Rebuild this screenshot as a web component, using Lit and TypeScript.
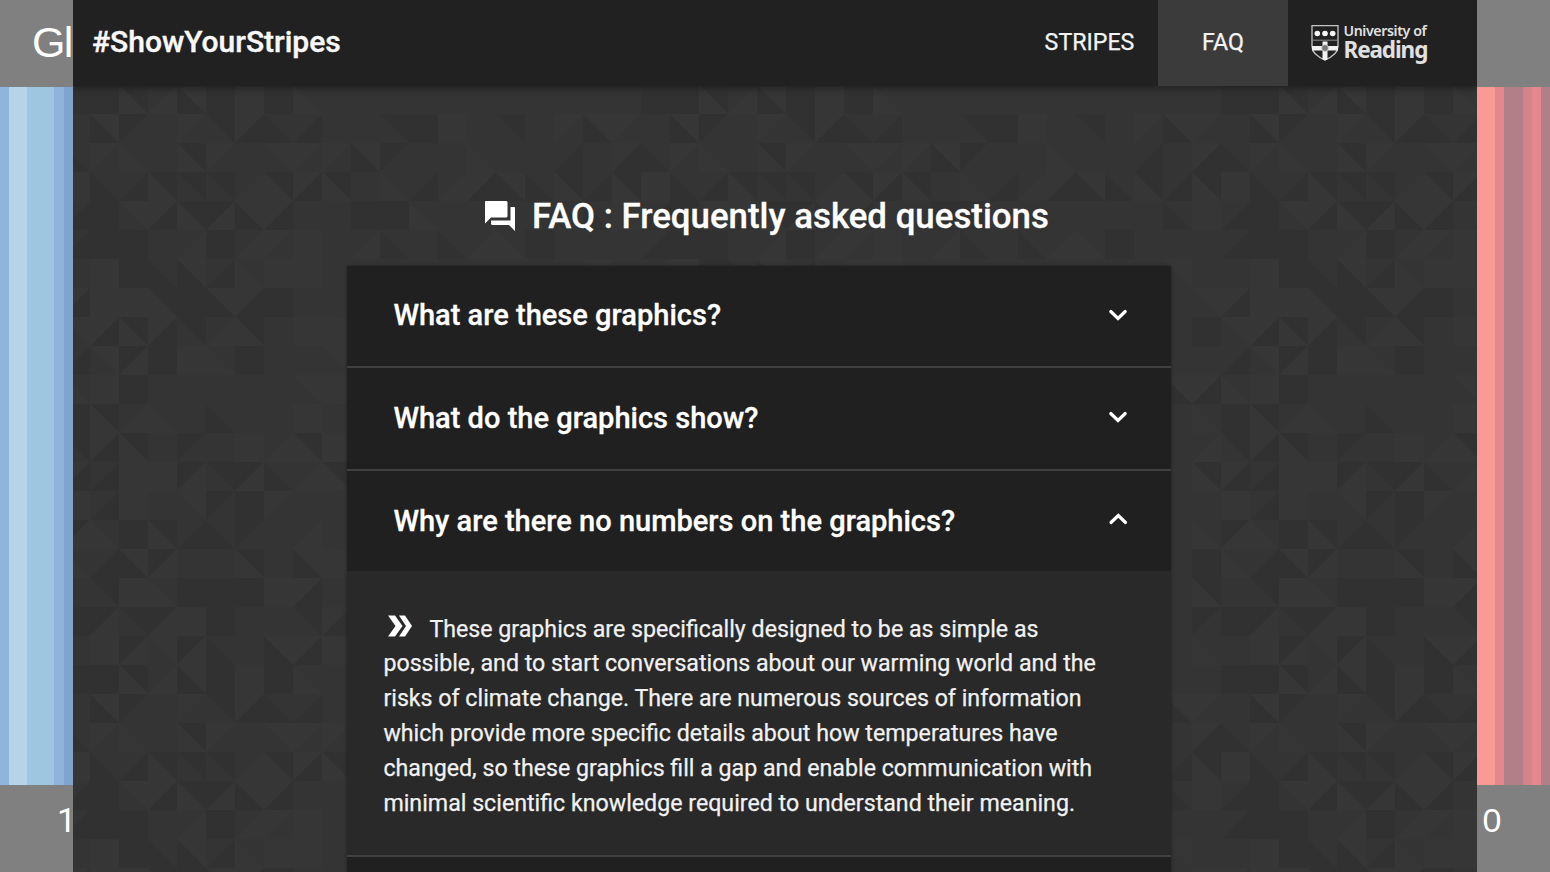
import { LitElement, html, svg, css } from "lit";
import { customElement, state } from "lit/decorators.js";

// Each token describes one square of the background tile.
// Triangles: a upper-right, b lower-left, c upper-left, e lower-right, d whole square.
// Lower case is the dark tone, upper case the light one.
const TILE = [
  "Ab c . C a Ce b e . . a d D . a . C Ab C",
  "C B . aB C . A C C Ab c . . B . . e . Ce b",
  "b e aB a a E aB Ce aB . B e E Ce bA b aB e Ba D",
  "d A Ce aB Ec bA Ce . . d d B . . . . . b D e",
  "d d . E d E C D . E b . b E B d . . . e",
  "D d b Ab e B D D . . . . . . . . . A . .",
  "D D aB d Ab Ce d . . . . . . . . . . . A Ce",
  "Ce aB Ce a E aB . D D . . . . . . . . . d A",
  "A cE d D B d . . A . . . . . . . . . . e",
  "D d . . . . . A D . . . . . . . . Ab Ce B",
  "aB E B . b . . D . . . . . . . . . . B d",
  "Ce aB . c . D E aB D . . . . . . . . . E a",
  "e D D cE a cE b E aB . . . . . . . . . aB Ce",
  "e D . A c d C . . . . . . . . . . . . D",
  "B d aB e b c . E . . . . . . . . . . B cE",
  "e Ab cE . . aB . Ab D . . . . . . . . . d B",
  "a D B d d d D Ce . . . . . . . . . . aB .",
  "cE a cE D d . . a Ce . . . . . . . . . c d",
  "D cE A cE b . Ab Ce D . . . . . . . . . B .",
  "d aB E Ab d D d B . . . . . . . . . . . d",
].map((row) => row.split(" "));

const CELL = 29;
const SHAPES: Record<string, string> = {
  a: "M0 0H29V29Z",
  b: "M0 0V29H29Z",
  c: "M0 0H29L0 29Z",
  e: "M29 0V29H0Z",
  d: "M0 0H29V29H0Z",
};

@customElement("triangle-backdrop")
export class TriangleBackdrop extends LitElement {
  static styles = css`
    :host { display: block; }
    svg { display: block; width: 100%; height: 100%; }
    .base { fill: #343434; }
    .dark { fill: #313131; }
    .light { fill: #363636; }
  `;
  render() {
    return html`<svg aria-hidden="true">
      <defs>
        <pattern id="tile" x="17" y="114" width="580" height="580" patternUnits="userSpaceOnUse">
          <rect class="base" width="580" height="580"></rect>
          ${TILE.map((row, y) =>
            row.map((cell, x) =>
              cell === "."
                ? null
                : [...cell].map(
                    (k) => svg`<path class=${k === k.toLowerCase() ? "dark" : "light"}
                      transform="translate(${x * CELL} ${y * CELL})" d=${SHAPES[k.toLowerCase()]}></path>`
                  )
            )
          )}
        </pattern>
      </defs>
      <rect width="100%" height="100%" fill="url(#tile)"></rect>
    </svg>`;
  }
}

@customElement("uor-logo")
export class UorLogo extends LitElement {
  static styles = css`
    :host { display: flex; align-items: flex-start; gap: 5px; }
    .shield { display: block; width: 28px; height: 38px; }
    .words { display: flex; flex-direction: column; font-family: "Noto Sans", "Open Sans", sans-serif; color: #e0e0e0; white-space: nowrap; }
    .top { font-size: 14.2px; line-height: 14px; font-weight: 600; letter-spacing: -0.4px; }
    .bottom { font-size: 22.5px; line-height: 23px; font-weight: 700; letter-spacing: -1.1px; }
  `;
  render() {
    return html`
      <svg class="shield" viewBox="0 0 28 37">
        <path d="M1 1.200H27V22C27 29 21 32.500 14 35.500C7 32.500 1 29 1 22Z" fill="none" stroke="#c4c4c4" stroke-width="1.300"/>
        <path d="M1 15.700H27" stroke="#8d8d8d" stroke-width="1"/>
        <path d="M1 21.500H27V26H1Z M11.500 17H16.500V35L14 36L11.500 35Z" fill="#f2f2f2"/>
        <circle cx="14" cy="23.500" r="3.300" fill="#777" stroke="#ccc" stroke-width=".7"/>
        <g fill="#f5f5f5"><circle cx="6.300" cy="9" r="2.800"/><circle cx="14" cy="9" r="2.800"/><circle cx="21.700" cy="9" r="2.800"/></g>
      </svg>
      <div class="words"><span class="top">University of</span><span class="bottom">Reading</span></div>
    `;
  }
}

@customElement("app-root")
export class AppRoot extends LitElement {
  static styles = css`
    :host {
      display: grid;
      grid-template-columns: 73px 1404px 73px;
      width: 1550px;
      height: 872px;
      overflow: hidden;
      background: #808080;
      font-family: Roboto, sans-serif;
      color: #fff;
    }
    .side {
      display: grid;
      grid-template-rows: 87px 697.5px 1fr;
      overflow: hidden;
      min-width: 0;
      font-family: "Liberation Sans", Arial, sans-serif;
      white-space: nowrap;
    }
    .cap { padding: 18px 0 0 32px; font-size: 43px; line-height: 49px; overflow: hidden; letter-spacing: -1.8px; }
    .year { padding: 15px 0 0 57px; font-family: Roboto, sans-serif; font-size: 34px; line-height: 40px; overflow: hidden; letter-spacing: -4px; }
    .year.right { padding: 15px 0 0 5.500px; font-family: "Liberation Sans", Arial, sans-serif; letter-spacing: 0; }
    .cold { background: linear-gradient(90deg, #8fb5db 9px, #b5d4e9 9px 27px, #9fc6e1 27px 54px, #8fb3da 54px 64px, #80a4cd 64px); }
    .warm { background: linear-gradient(90deg, #f99b94 18.5px, #e4888e 18.5px 27.5px, #b27e87 27.5px 46px, #d38488 46px 55px, #e4888e 55px 64px, #b27e87 64px); }
    .page { display: grid; grid-template: 872px / 1404px; overflow: hidden; min-width: 0; }
    .page > * { grid-area: 1 / 1; }
    .front { display: flex; flex-direction: column; align-items: flex-start; overflow: hidden; }
    header {
      display: flex;
      flex: none;
      width: 100%;
      height: 86px;
      box-sizing: border-box;
      padding-left: 19px;
      background: #212121;
      box-shadow: 0 2px 7px rgba(0, 0, 0, 0.4);
    }
    .brand { flex: 1; font-size: 30px; font-weight: 500; line-height: 83px; white-space: nowrap; color: #f8f8f8; -webkit-text-stroke: 0.4px #f8f8f8; }
    .tab { width: 130px; text-align: center; font-size: 23.2px; line-height: 84px; height: 85.500px; color: #f3f3f3; -webkit-text-stroke: 0.25px #f3f3f3; }
    .tab.stripes { width: 137px; }
    .tab.active { background: #3b3b3b; }
    .logo { width: 189px; box-sizing: border-box; padding: 24px 0 0 22.500px; }
    .headline { display: flex; align-items: center; height: 60px; margin: 101px 0 0 409px; gap: 14px; }
    .headline svg { width: 36px; height: 36px; margin-top: -2px; }
    h1 { margin: 0; font-size: 34.84px; font-weight: 500; line-height: 60px; white-space: nowrap; -webkit-text-stroke: 0.3px #fff; }
    .faq { width: 824px; margin: 19px 0 0 274.400px; box-shadow: 0 0 3px rgba(0, 0, 0, 0.4); flex: none; }
    .item { border-bottom: 2px solid #404040; }
    .question {
      display: flex;
      justify-content: space-between;
      align-items: center;
      height: 100.300px;
      box-sizing: border-box;
      padding: 0 41px 1.400px 46px;
      background: #202020;
      font-size: 29.04px;
      font-weight: 500;
      white-space: nowrap;
      cursor: pointer;
      -webkit-text-stroke: 0.3px #fff;
    }
    .item:nth-child(3) .question { padding-bottom: 0; }
    .chevron { width: 24px; height: 24px; margin-top: -1px; }
    .answer { box-sizing: border-box; height: 284px; padding: 40.700px 36px 0; background: #292929; font-size: 23.2px; line-height: 34.800px; white-space: nowrap; color: #f1f1f1; -webkit-text-stroke: 0.25px #f1f1f1; }
    .answer svg { width: 26px; height: 24px; margin: 0 16px 0 4px; vertical-align: -1px; }
    .answer span { display: block; }
  `;

  @state() private open = 2;

  private questions = [
    "What are these graphics?",
    "What do the graphics show?",
    "Why are there no numbers on the graphics?",
    "",
  ];

  private answer = [
    "These graphics are specifically designed to be as simple as",
    "possible, and to start conversations about our warming world and the",
    "risks of climate change. There are numerous sources of information",
    "which provide more specific details about how temperatures have",
    "changed, so these graphics fill a gap and enable communication with",
    "minimal scientific knowledge required to understand their meaning.",
  ];

  private renderAnswer() {
    return html`<div class="answer">
      ${this.answer.map(
        (line, i) => html`<span>${i === 0
          ? html`<svg viewBox="0 0 26 24"><path d="M1 1.500H8L15.500 12L8 22.500H1L8.500 12ZM12 1.500H18L25 12L18 22.500H12L19 12Z" fill="#fff"/></svg>`
          : null}${line}</span>`
      )}
    </div>`;
  }

  render() {
    return html`
      <div class="side">
        <div class="cap">Gl</div>
        <div class="cold"></div>
        <div class="year">1</div>
      </div>
      <div class="page">
        <triangle-backdrop></triangle-backdrop>
        <div class="front">
          <header>
            <div class="brand">#ShowYourStripes</div>
            <div class="tab stripes">STRIPES</div>
            <div class="tab active">FAQ</div>
            <div class="logo"><uor-logo></uor-logo></div>
          </header>
          <div class="headline">
            <svg viewBox="0 0 24 24" fill="#fff"><path d="M21.500 6H19v9H6v2c0 .55.45 1 1 1h11l4 4V6.500c0-.3-.2-.5-.5-.5zM17 12V3c0-.55-.45-1-1-1H2.500c-.3 0-.5.2-.5.500V17l4-4h10c.55 0 1-.45 1-1z"/></svg>
            <h1>FAQ : Frequently asked questions</h1>
          </div>
          <div class="faq">
            ${this.questions.map(
              (q, i) => html`<div class="item">
                <div class="question" @click=${() => (this.open = i)}>
                  <span>${q}</span>
                  <svg class="chevron" viewBox="0 0 24 24" fill="none" stroke="#fff" stroke-width="3.200" stroke-linecap="round">
                    <path d=${this.open === i ? "M5 14.500L12.300 7.500L19.500 14.500" : "M4.800 8.500L12 15.500L19.200 8.500"}/>
                  </svg>
                </div>
                ${this.open === i ? this.renderAnswer() : null}
              </div>`
            )}
          </div>
        </div>
      </div>
      <div class="side">
        <div class="cap"></div>
        <div class="warm"></div>
        <div class="year right">0</div>
      </div>
    `;
  }
}
